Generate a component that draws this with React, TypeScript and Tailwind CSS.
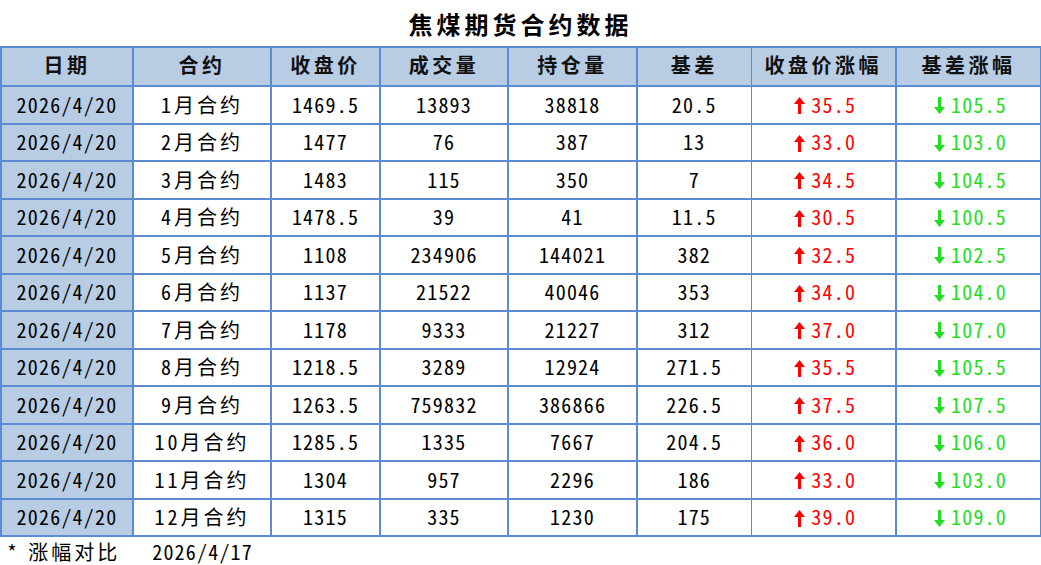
import { ReactNode } from "react";

const rows = [
	["1月合约", "1469.5", "13893", "38818", "20.5", "35.5", "105.5"],
	["2月合约", "1477", "76", "387", "13", "33.0", "103.0"],
	["3月合约", "1483", "115", "350", "7", "34.5", "104.5"],
	["4月合约", "1478.5", "39", "41", "11.5", "30.5", "100.5"],
	["5月合约", "1108", "234906", "144021", "382", "32.5", "102.5"],
	["6月合约", "1137", "21522", "40046", "353", "34.0", "104.0"],
	["7月合约", "1178", "9333", "21227", "312", "37.0", "107.0"],
	["8月合约", "1218.5", "3289", "12924", "271.5", "35.5", "105.5"],
	["9月合约", "1263.5", "759832", "386866", "226.5", "37.5", "107.5"],
	["10月合约", "1285.5", "1335", "7667", "204.5", "36.0", "106.0"],
	["11月合约", "1304", "957", "2296", "186", "33.0", "103.0"],
	["12月合约", "1315", "335", "1230", "175", "39.0", "109.0"],
];

const headers = ["日期", "合约", "收盘价", "成交量", "持仓量", "基差", "收盘价涨幅", "基差涨幅"];
const widths = ["w-[132px]", "w-[138px]", "w-[109px]", "w-[128px]", "w-[129px]", "w-[114px]", "w-[145px]", "w-[145px]"];

// half-width latin forms of the CJK font, like SimHei digits
const body = "font-['Noto_Sans_CJK_SC',sans-serif] [font-feature-settings:'hwid'] text-[20px] tracking-[1.2px]";

function UpArrow() {
	return (
		<svg width="11" height="17" viewBox="0 0 11 17" className="inline-block mr-[6px] -mt-[3px] align-middle">
			<polygon points="5.5,0 11,7 7,7 7,17 4,17 4,7 0,7" fill="#ff0000" />
		</svg>
	);
}

function DownArrow() {
	return (
		<svg width="11" height="17" viewBox="0 0 11 17" className="inline-block mr-[6px] -mt-[3px] align-middle">
			<polygon points="5.5,17 11,10 7,10 7,0 4,0 4,10 0,10" fill="#22dd22" />
		</svg>
	);
}

function cellBorder(i: number) {
	// column 6 / 7 share a thin line
	if (i === 5) return "border-y-2 border-l-2 border-r";
	if (i === 6) return "border-y-2 border-r-2 border-l";
	return "border-2";
}

function Cell({ i, children, head }: { i: number; children: ReactNode; head?: boolean }) {
	const bg = head || i === 0 ? "bg-[#b8cce4]" : "bg-white";
	return (
		<td className={`${cellBorder(i)} border-[#5b8bd0] ${bg} ${widths[i]} p-0 text-center whitespace-nowrap`}>
			{children}
		</td>
	);
}

export default function App() {
	return (
		<div className="w-[1041px] h-[565px] bg-white overflow-hidden text-[#111]">
			<div className="h-[46px] flex items-center justify-center pt-[2px]">
				<h1 className="font-['Noto_Sans_CJK_SC',sans-serif] font-bold text-[24px] tracking-[4px] text-black">
					焦煤期货合约数据
				</h1>
			</div>

			<table className="border-collapse table-fixed w-[1040px]">
				<thead>
					<tr className="h-[39px]">
						{headers.map((h, i) => (
							<Cell key={h} i={i} head>
								<span className="font-['Noto_Sans_CJK_SC',sans-serif] font-bold text-[20px] tracking-[3.5px] leading-none">
									{h}
								</span>
							</Cell>
						))}
					</tr>
				</thead>
				<tbody className={`${body} text-black`}>
					{rows.map((r) => (
						<tr key={r[0]} className="h-[37.5px]">
							<Cell i={0}>2026/4/20</Cell>
							<Cell i={1}>
								<span className="tracking-[3px]">{r[0]}</span>
							</Cell>
							<Cell i={2}>{r[1]}</Cell>
							<Cell i={3}>{r[2]}</Cell>
							<Cell i={4}>{r[3]}</Cell>
							<Cell i={5}>{r[4]}</Cell>
							<Cell i={6}>
								<span className="text-[#ff0000] pl-[4px]">
									<UpArrow />
									{r[5]}
								</span>
							</Cell>
							<Cell i={7}>
								<span className="text-[#22dd22] pl-[4px]">
									<DownArrow />
									{r[6]}
								</span>
							</Cell>
						</tr>
					))}
				</tbody>
			</table>

			<div className={`${body} text-black flex items-center h-[30px] pl-[7px]`}>
				<span>*</span>
				<span className="ml-[10px] tracking-[3px]">涨幅对比</span>
				<span className="ml-[32px]">2026/4/17</span>
			</div>
		</div>
	);
}
